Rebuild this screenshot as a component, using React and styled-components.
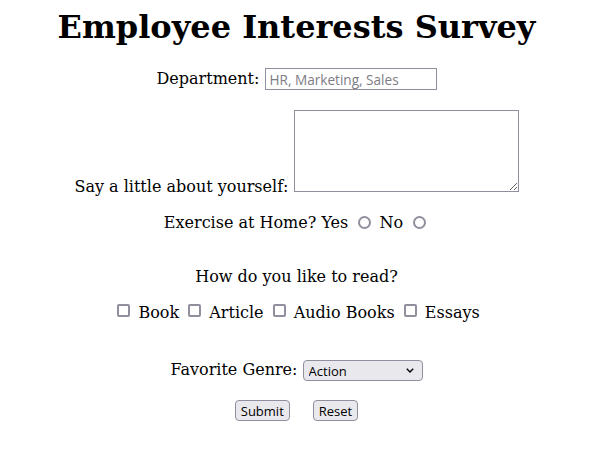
import React from "react";
import styled, { createGlobalStyle, css } from "styled-components";

const Global = createGlobalStyle`
  body {
    margin: 8px;
    font-family: "DejaVu Serif", serif;
    font-size: 16px;
    color: #000;
    background: #fff;
  }
`;

const controlFont = css`
  font-family: "Open Sans", "Noto Sans", sans-serif;
  font-size: 13px;
  color: #000;
`;

const Title = styled.h1`
  font-size: 32px;
  font-weight: bold;
  text-align: center;
  margin: 0 0 22px;
`;

const Form = styled.form`
  text-align: center;
`;

const Row = styled.div`
  margin-top: ${(p) => p.$top || 0}px;
`;

const TextInput = styled.input`
  ${controlFont}
  font-size: 13.6px;
  box-sizing: border-box;
  width: 172px;
  height: 22px;
  padding: 0 4px;
  border: 1px solid #8f8f9d;
  border-radius: 0;
  background: #fff;
  vertical-align: middle;
  &::placeholder {
    color: #7d7d85;
  }
`;

const Area = styled.textarea`
  ${controlFont}
  box-sizing: border-box;
  width: 225px;
  height: 82px;
  padding: 2px;
  border: 1px solid #8f8f9d;
  border-radius: 0;
  background: #fff;
`;

const Radio = styled.input.attrs({ type: "radio" })`
  appearance: none;
  box-sizing: border-box;
  width: 13px;
  height: 13px;
  margin: 3px 3px 0 5px;
  border: 2px solid #8f8f9d;
  border-radius: 50%;
  background: #fff;
  vertical-align: -1px;
  &:checked {
    background: radial-gradient(circle, #0060df 0 3px, #fff 3.5px);
  }
`;

const Check = styled.input.attrs({ type: "checkbox" })`
  appearance: none;
  box-sizing: border-box;
  width: 13px;
  height: 13px;
  margin: 3px 3px 3px 4px;
  border: 2px solid #8f8f9d;
  border-radius: 2px;
  background: #fff;
  vertical-align: -2px;
  &:checked {
    background: #0060df;
    border-color: #0060df;
  }
`;

const Select = styled.select`
  ${controlFont}
  appearance: none;
  box-sizing: border-box;
  width: 120px;
  height: 21px;
  padding: 0 20px 0 5px;
  border: 1px solid #8f8f9d;
  border-radius: 4px;
  background-color: #e9e9ed;
  background-image: url("data:image/svg+xml,%3Csvg xmlns='http://www.w3.org/2000/svg' width='8' height='5' viewBox='0 0 8 5'%3E%3Cpath d='M0.8 0.8 L4 4 L7.2 0.8' fill='none' stroke='%23000' stroke-width='1.4'/%3E%3C/svg%3E");
  background-repeat: no-repeat;
  background-position: right 8px center;
  text-align: left;
  vertical-align: middle;
`;

const Button = styled.button`
  ${controlFont}
  box-sizing: border-box;
  height: 21px;
  padding: 0 5px;
  margin: 0 ${(p) => p.$gap || 0}px 0 0;
  border: 1px solid #8f8f9d;
  border-radius: 4px;
  background: #e9e9ed;
  vertical-align: middle;
`;

export default function App() {
  return (
    <>
      <Global />
      <Title>Employee Interests Survey</Title>
      <Form onSubmit={(e) => e.preventDefault()}>
        <Row>
          Department: <TextInput type="text" placeholder="HR, Marketing, Sales" />
        </Row>
        <Row $top={20}>
          Say a little about yourself: <Area />
        </Row>
        <Row $top={17}>
          Exercise at Home? Yes <Radio name="ex" /> No <Radio name="ex" />
        </Row>
        <Row $top={35}>How do you like to read?</Row>
        <Row $top={15}>
          <Check /> Book <Check /> Article <Check /> Audio Books <Check /> Essays
        </Row>
        <Row $top={38}>
          Favorite Genre:{" "}
          <Select defaultValue="Action">
            <option>Action</option>
            <option>Drama</option>
            <option>Comedy</option>
          </Select>
        </Row>
        <Row $top={19}>
          <Button type="submit" $gap={23}>
            Submit
          </Button>
          <Button type="reset">Reset</Button>
        </Row>
      </Form>
    </>
  );
}
